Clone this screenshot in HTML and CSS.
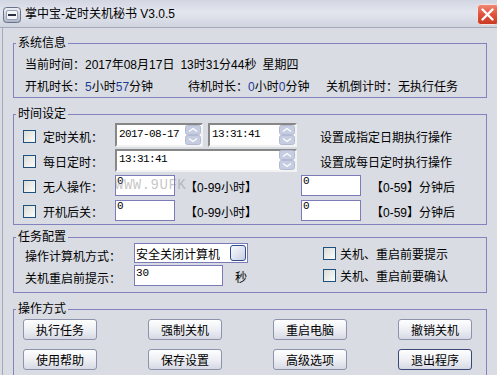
FILE: index.html
```html
<!DOCTYPE html>
<html lang="zh-CN">
<head>
    <meta charset="UTF-8">
    <title>掌中宝-定时关机秘书 V3.0.5</title>
    <link rel="stylesheet" href="styles.css">
</head>
<body>
    <div class="window">
        <div class="titlebar">
            <svg class="app-icon" width="18" height="16" viewBox="0 0 18 16">
                <defs>
                    <linearGradient id="ig" x1="0" y1="0" x2="0" y2="1">
                        <stop offset="0" stop-color="#eef0f6"/>
                        <stop offset="1" stop-color="#aab2c6"/>
                    </linearGradient>
                </defs>
                <rect x="0.5" y="0.5" width="17" height="15" rx="3" fill="url(#ig)" stroke="#6a7288"/>
                <rect x="3.5" y="3.5" width="11" height="9" rx="1.5" fill="#f4f5f9" stroke="#9aa2b6"/>
                <rect x="5" y="7" width="8" height="2" fill="#2a3040"/>
            </svg>
            <span class="title">掌中宝-定时关机秘书 V3.0.5</span>
            <svg class="close-btn" width="21" height="21" viewBox="0 0 21 21">
                <defs>
                    <linearGradient id="cg" x1="0" y1="0" x2="0" y2="1">
                        <stop offset="0" stop-color="#f08a78"/>
                        <stop offset="0.5" stop-color="#e0523c"/>
                        <stop offset="1" stop-color="#c83a24"/>
                    </linearGradient>
                </defs>
                <rect x="0.5" y="0.5" width="21" height="20" rx="3" fill="url(#cg)" stroke="#f6e4e0"/>
                <path d="M5.5 5.5 L15.5 15.5 M15.5 5.5 L5.5 15.5" stroke="#fff" stroke-width="2.4" stroke-linecap="round"/>
            </svg>
        </div>

        <div class="client">
            <div class="group group-info">
                <div class="group-title">系统信息</div>
                <div class="group-body">
                    <div class="info-row">
                        当前时间：2017年08月17日<span class="sep">13时31分44秒</span><span class="sep">星期四</span>
                    </div>
                    <div class="info-row">
                        <span class="col-a">开机时长：<span class="num">5</span>小时<span class="num">57</span>分钟</span>
                        <span class="col-b">待机时长：<span class="num">0</span>小时<span class="num">0</span>分钟</span>
                        <span>关机倒计时：无执行任务</span>
                    </div>
                </div>
            </div>

            <div class="group group-time">
                <div class="group-title">时间设定</div>
                <div class="group-body">
                    <div class="time-row">
                        <span class="check"></span>
                        <span class="row-label">定时关机：</span>
                        <div class="field sunken date-field">
                            <span class="mono">2017-08-17</span>
                            <svg class="spin" width="16" height="20" viewBox="0 0 16 20">
                                <rect x="0.5" y="0.5" width="15" height="9" rx="2" fill="#c6cde1" stroke="#b2bbd3"/>
                                <rect x="0.5" y="10.5" width="15" height="9" rx="2" fill="#c6cde1" stroke="#b2bbd3"/>
                                <path d="M4 6.5 L8 3.5 L12 6.5" fill="none" stroke="#fff" stroke-width="1.3"/>
                                <path d="M4 13.5 L8 16.5 L12 13.5" fill="none" stroke="#fff" stroke-width="1.3"/>
                            </svg>
                        </div>
                        <div class="field sunken clock-field">
                            <span class="mono">13:31:41</span>
                            <svg class="spin" width="16" height="20" viewBox="0 0 16 20">
                                <rect x="0.5" y="0.5" width="15" height="9" rx="2" fill="#c6cde1" stroke="#b2bbd3"/>
                                <rect x="0.5" y="10.5" width="15" height="9" rx="2" fill="#c6cde1" stroke="#b2bbd3"/>
                                <path d="M4 6.5 L8 3.5 L12 6.5" fill="none" stroke="#fff" stroke-width="1.3"/>
                                <path d="M4 13.5 L8 16.5 L12 13.5" fill="none" stroke="#fff" stroke-width="1.3"/>
                            </svg>
                        </div>
                        <span class="row-note">设置成指定日期执行操作</span>
                    </div>
                    <div class="time-row">
                        <span class="check"></span>
                        <span class="row-label">每日定时：</span>
                        <div class="field sunken daily-field">
                            <span class="mono">13:31:41</span>
                            <svg class="spin" width="16" height="20" viewBox="0 0 16 20">
                                <rect x="0.5" y="0.5" width="15" height="9" rx="2" fill="#c6cde1" stroke="#b2bbd3"/>
                                <rect x="0.5" y="10.5" width="15" height="9" rx="2" fill="#c6cde1" stroke="#b2bbd3"/>
                                <path d="M4 6.5 L8 3.5 L12 6.5" fill="none" stroke="#fff" stroke-width="1.3"/>
                                <path d="M4 13.5 L8 16.5 L12 13.5" fill="none" stroke="#fff" stroke-width="1.3"/>
                            </svg>
                        </div>
                        <span class="row-note">设置成每日定时执行操作</span>
                    </div>
                    <div class="time-row has-mark">
                        <span class="check"></span>
                        <span class="row-label">无人操作：</span>
                        <div class="field flat small-field">0</div>
                        <span class="range">【0-99小时】</span>
                        <div class="field flat small-field">0</div>
                        <span class="unit">【0-59】分钟后</span>
                        <span class="watermark">WWW.9UFK</span>
                    </div>
                    <div class="time-row">
                        <span class="check"></span>
                        <span class="row-label">开机后关：</span>
                        <div class="field flat small-field">0</div>
                        <span class="range">【0-99小时】</span>
                        <div class="field flat small-field">0</div>
                        <span class="unit">【0-59】分钟后</span>
                    </div>
                </div>
            </div>

            <div class="group group-task">
                <div class="group-title">任务配置</div>
                <div class="group-body">
                    <div class="task-row">
                        <div class="task-left">
                            <span class="task-label">操作计算机方式：</span>
                            <div class="combo">
                                <span>安全关闭计算机</span>
                                <span class="combo-btn"></span>
                            </div>
                        </div>
                        <span class="check"></span>
                        <span class="check-text">关机、重启前要提示</span>
                    </div>
                    <div class="task-row second">
                        <div class="task-left">
                            <span class="task-label">关机重启前提示：</span>
                            <div class="field flat delay-field">30</div>
                            <span class="sec">秒</span>
                        </div>
                        <span class="check"></span>
                        <span class="check-text">关机、重启前要确认</span>
                    </div>
                </div>
            </div>

            <div class="group group-ops">
                <div class="group-title">操作方式</div>
                <div class="group-body">
                    <div class="btn-row">
                        <button class="btn">执行任务</button>
                        <button class="btn">强制关机</button>
                        <button class="btn">重启电脑</button>
                        <button class="btn">撤销关机</button>
                    </div>
                    <div class="btn-row">
                        <button class="btn">使用帮助</button>
                        <button class="btn">保存设置</button>
                        <button class="btn">高级选项</button>
                        <button class="btn default">退出程序</button>
                    </div>
                </div>
            </div>
        </div>
    </div>
</body>
</html>
```

FILE: styles.css
```css
* {
    box-sizing: border-box;
}
html, body {
    margin: 0;
    padding: 0;
}
body {
    width: 497px;
    height: 375px;
    overflow: hidden;
    background: #d9dce3;
    font-family: "Liberation Sans", "Noto Sans CJK SC", sans-serif;
    font-size: 12px;
    color: #000;
}
.window {
    width: 497px;
    height: 375px;
    overflow: hidden;
}

/* title bar */
.titlebar {
    height: 28px;
    display: flex;
    align-items: center;
    padding-left: 3px;
    background: linear-gradient(to bottom, #d2d6e1, #e3e6ee 45%, #d0d4df);
    border-bottom: 1px solid #a3a9bb;
}
.app-icon {
    margin-top: 2px;
    margin-right: 4px;
    flex-shrink: 0;
}
.title {
    flex: 1;
    font-size: 12px;
    line-height: 14px;
}
.close-btn {
    flex-shrink: 0;
    margin-top: 1px;
    margin-right: -1px;
}

.client {
    height: 347px;
    margin-left: 2px;
    border-left: 1px solid #a3a9bb;
    padding-top: 15px;
}

/* group boxes */
.group {
    width: 474px;
    margin-left: 10px;
    border: 1px solid #8282bf;
}
.group-title {
    width: fit-content;
    height: 14px;
    line-height: 14px;
    margin: -8px 0 -6px 2px;
    padding: 0 2px;
    background: #d9dce3;
}
.group-info {
    height: 55px;
}
.group-info .group-body {
    padding: 14px 0 0 11px;
}
.group-time {
    height: 111px;
    margin-top: 16px;
}
.group-time .group-body {
    padding: 9px 0 0 9px;
}
.group-task {
    height: 56px;
    margin-top: 12px;
}
.group-task .group-body {
    padding: 5px 0 0 11px;
}
.group-ops {
    height: 80px;
    margin-top: 16px;
}
.group-ops .group-body {
    padding: 9px 0 0 9px;
}

/* system info */
.info-row {
    height: 14px;
    line-height: 14px;
    white-space: nowrap;
    display: flex;
}
.info-row + .info-row {
    margin-top: 8px;
}
.sep {
    margin-left: 6px;
}
.num {
    color: #1d3c9a;
}
.col-a {
    width: 163px;
}
.col-b {
    width: 138px;
}

/* checkbox */
.check {
    display: inline-block;
    flex-shrink: 0;
    width: 13px;
    height: 13px;
    border: 1px solid #1c5180;
    background: linear-gradient(135deg, #dcdcd6, #fbfbfb);
}

/* time settings */
.time-row {
    position: relative;
    height: 22px;
    display: flex;
    align-items: center;
    white-space: nowrap;
}
.time-row + .time-row {
    margin-top: 3px;
}
.time-row .check {
    margin-right: 7px;
    margin-top: 2px;
}
.row-label {
    width: 72px;
    margin-top: 2px;
}
.field {
    background: #fff;
    flex-shrink: 0;
}
.sunken {
    display: flex;
    align-items: center;
    justify-content: space-between;
    border: 2px solid;
    border-color: #878787 #f2f2f2 #f2f2f2 #878787;
    padding: 0 0 0 2px;
}
.mono {
    font-family: "Liberation Mono", monospace;
    font-size: 11px;
    letter-spacing: -0.6px;
    margin-top: -2px;
}
.spin {
    display: block;
}
.date-field {
    width: 88px;
    height: 24px;
}
.clock-field {
    width: 89px;
    height: 24px;
    margin-left: 5px;
}
.daily-field {
    width: 182px;
    height: 23px;
}
.row-note {
    margin-left: 23px;
    margin-top: 2px;
}
.flat {
    border: 1px solid #7b7bb9;
    padding: 0 1px;
    font-family: "Liberation Mono", monospace;
    font-size: 11px;
    line-height: 11px;
}
.small-field {
    width: 60px;
    height: 21px;
}
.range {
    width: 126px;
    padding-left: 10px;
    margin-top: 2px;
}
.unit {
    margin-left: 10px;
    margin-top: 2px;
}
.watermark {
    position: absolute;
    left: 92px;
    top: 3px;
    font-family: "Liberation Mono", monospace;
    font-size: 14px;
    letter-spacing: 0.5px;
    color: rgba(150, 150, 150, 0.55);
}

/* task config */
.task-row {
    height: 20px;
    display: flex;
    align-items: center;
    white-space: nowrap;
}
.task-row.second {
    height: 21px;
    margin-top: 2px;
}
.task-left {
    width: 298px;
    display: flex;
    align-items: center;
    height: 100%;
}
.task-label {
    width: 109px;
    margin-top: 4px;
}
.combo {
    width: 114px;
    height: 20px;
    border: 1px solid #7b7bb9;
    background: #fff;
    display: flex;
    align-items: center;
    justify-content: space-between;
    padding-left: 1px;
}
.combo-btn {
    width: 16px;
    height: 16px;
    margin-right: 1px;
    border: 1px solid #2d4f8c;
    border-radius: 3px;
    background: linear-gradient(135deg, #fafbfd, #c8cfe3);
}
.delay-field {
    width: 89px;
    height: 21px;
    padding-top: 2px;
}
.sec {
    margin-left: 12px;
    margin-top: 2px;
}
.task-row .check {
    margin-right: 4px;
}

/* buttons */
.btn-row {
    display: flex;
    gap: 51px;
}
.btn-row + .btn-row {
    margin-top: 9px;
}
.btn {
    width: 74px;
    height: 21px;
    padding: 0;
    border: 1px solid #8d93ab;
    border-radius: 3px;
    background: linear-gradient(to bottom, #fefefe, #eceef3 55%, #d6d9e4);
    font-family: inherit;
    font-size: 12px;
    color: #000;
}
.btn.default {
    border-color: #3a4878;
}
```
